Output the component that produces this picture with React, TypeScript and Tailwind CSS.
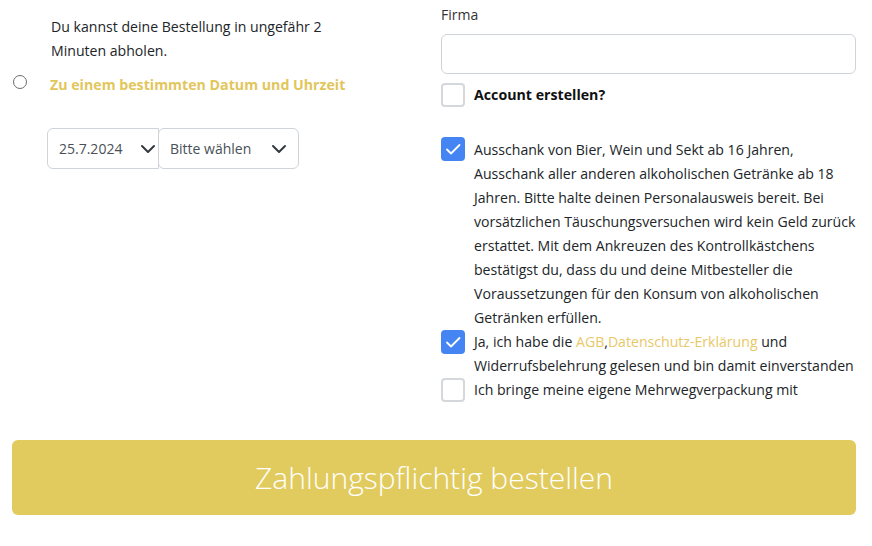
import React from 'react';

const Chevron = () => (
  <svg width="16" height="16" viewBox="0 0 16 16" fill="none" className="shrink-0">
    <path d="M2 5l6 6 6-6" stroke="#343a40" strokeWidth="2" strokeLinecap="round" strokeLinejoin="round" />
  </svg>
);

const Check = () => (
  <svg width="20" height="20" viewBox="0 0 20 20" fill="none">
    <path d="M4 10.5l4 4L16.5 6" stroke="#fff" strokeWidth="1.8" strokeLinecap="round" strokeLinejoin="round" />
  </svg>
);

const Box = ({ checked }: { checked?: boolean }) =>
  checked ? (
    <div className="w-6 h-6 rounded bg-[#4584f3] flex items-center justify-center shrink-0">
      <Check />
    </div>
  ) : (
    <div className="w-6 h-6 rounded border-2 border-[#d4d7dc] bg-white shrink-0" />
  );

export default function App() {
  return (
    <div className="w-[872px] h-[546px] bg-white text-[#212529] text-[14.1px] leading-6 font-['Open_Sans',sans-serif] relative overflow-hidden">
      <div className="flex">
        {/* left column */}
        <div className="w-[441px] shrink-0">
          <div className="pl-[51px] pt-[15px]">
            Du kannst deine Bestellung in ungefähr 2<br />
            Minuten abholen.
          </div>
          <div className="flex items-center mt-[4px] pl-[13px]">
            <div className="w-[14px] h-[14px] rounded-full border border-[#6d6d6d]" />
            <span className="ml-[23px] mt-[6px] font-bold text-[14.2px] text-[#e2c65b]">Zu einem bestimmten Datum und Uhrzeit</span>
          </div>
          <div className="flex ml-[47px] mt-[31px]">
            <div className="w-[112px] h-[41px] rounded-l-[6px] border border-[#ced4da] flex items-center justify-between pl-[11px] pr-[2px] text-[#495057] text-[14px]">
              <span>25.7.2024</span>
              <Chevron />
            </div>
            <div className="w-[141px] -ml-px h-[41px] rounded-[6px] border border-[#ced4da] flex items-center justify-between pl-[11px] pr-[11px] text-[#495057] text-[14px]">
              <span>Bitte wählen</span>
              <Chevron />
            </div>
          </div>
        </div>

        {/* right column */}
        <div className="w-[415px] shrink-0 pt-[3px]">
          <div className="text-[14px] text-[#333]">Firma</div>
          <div className="mt-[7px] h-[40px] rounded-[6px] border border-[#ced4da]" />
          <div className="flex items-center gap-[9px] mt-[9px]">
            <Box />
            <span className="font-bold text-[14.2px] text-[#111]">Account erstellen?</span>
          </div>
          <div className="flex gap-[9px] mt-[30px]">
            <Box checked />
            <div className="pt-px whitespace-nowrap">
              Ausschank von Bier, Wein und Sekt ab 16 Jahren,<br />
              Ausschank aller anderen alkoholischen Getränke ab 18<br />
              Jahren. Bitte halte deinen Personalausweis bereit. Bei<br />
              vorsätzlichen Täuschungsversuchen wird kein Geld zurück<br />
              erstattet. Mit dem Ankreuzen des Kontrollkästchens<br />
              bestätigst du, dass du und deine Mitbesteller die<br />
              Voraussetzungen für den Konsum von alkoholischen<br />
              Getränken erfüllen.
            </div>
          </div>
          <div className="flex gap-[9px]">
            <Box checked />
            <div className="whitespace-nowrap">
              Ja, ich habe die <span className="text-[#e8c867]">AGB</span>,<span className="text-[#e8c867]">Datenschutz-Erklärung</span> und<br />
              Widerrufsbelehrung gelesen und bin damit einverstanden
            </div>
          </div>
          <div className="flex items-center gap-[9px]">
            <Box />
            <span>Ich bringe meine eigene Mehrwegverpackung mit</span>
          </div>
        </div>
      </div>

      <div className="mx-[12px] mt-[38px] w-[844px] h-[75px] rounded-[6px] bg-[#e2cb5e] flex items-center justify-center">
        <span className="text-white text-[30px] font-light">Zahlungspflichtig bestellen</span>
      </div>
    </div>
  );
}
